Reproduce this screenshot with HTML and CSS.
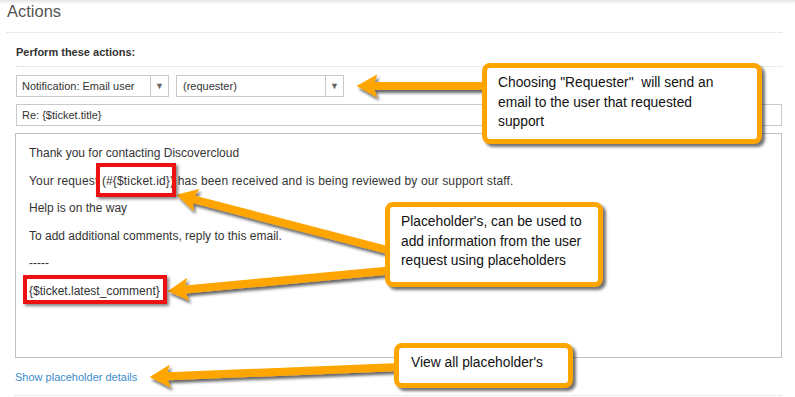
FILE: index.html
```html
<!DOCTYPE html>
<html lang="en">
<head>
  <meta charset="UTF-8" />
  <title>Actions</title>
  <link rel="stylesheet" href="styles.css">
</head>
<body>
  <div class="page">
    <h1 class="title">Actions</h1>

    <div class="panel">
      <h2 class="panel-title">Perform these actions:</h2>

      <div class="select-row">
        <div class="select select-action">
          <span class="select-value">Notification: Email user</span>
          <span class="select-arrow">&#9660;</span>
        </div>
        <div class="select select-target">
          <span class="select-value">(requester)</span>
          <span class="select-arrow">&#9660;</span>
        </div>
      </div>

      <div class="subject">Re: {$ticket.title}</div>

      <div class="message">
        <p>Thank you for contacting Discovercloud</p>
        <p class="wide">Your request (#{$ticket.id}) has been received and is being reviewed by our support staff.</p>
        <p>Help is on the way</p>
        <p>To add additional comments, reply to this email.</p>
        <p>-----</p>
        <p>{$ticket.latest_comment}</p>
      </div>

      <div class="details-row">
        <a class="details-link" href="#">Show placeholder details</a>
      </div>
    </div>

    <!-- annotations -->
    <svg class="arrows" width="795" height="397" viewBox="0 0 795 397">
      <defs>
        <marker id="head" viewBox="0 0 10 10" refX="4" refY="5" markerWidth="2.6" markerHeight="2.9" preserveAspectRatio="none" orient="auto">
          <path d="M0,0 L10,5 L0,10 L2,5 z" fill="#ffa500" />
        </marker>
        <filter id="shade" x="-10%" y="-50%" width="120%" height="200%">
          <feDropShadow dx="2" dy="3" stdDeviation="1.5" flood-color="#000" flood-opacity="0.6" />
        </filter>
      </defs>
      <g filter="url(#shade)" stroke="#ffa500" stroke-width="8" fill="none">
        <line x1="490" y1="86" x2="369" y2="86" marker-end="url(#head)" />
        <line x1="395" y1="252" x2="188.6" y2="198" marker-end="url(#head)" />
        <line x1="395" y1="270" x2="180" y2="290" marker-end="url(#head)" />
        <line x1="400" y1="367" x2="162" y2="376.5" marker-end="url(#head)" />
      </g>
    </svg>

    <div class="mark mark-id"></div>
    <div class="mark mark-comment"></div>

    <div class="callout callout-requester">Choosing "Requester"&nbsp; will send an<br>email to the user that requested<br>support</div>
    <div class="callout callout-placeholders">Placeholder's, can be used to<br>add information from the user<br>request using placeholders</div>
    <div class="callout callout-all">View all placeholder's</div>
  </div>
</body>
</html>
```

FILE: styles.css
```css
* {
  box-sizing: border-box;
}

body {
  margin: 0;
  font-family: "Liberation Sans", Arial, sans-serif;
  color: #333;
  background: linear-gradient(#e4e4e4, #fff 4px) no-repeat;
}

.page {
  position: relative;
  width: 795px;
  height: 397px;
  overflow: hidden;
}

.title {
  margin: 0 0 0 7px;
  width: 775px;
  padding-bottom: 10px;
  font-size: 16.5px;
  font-weight: normal;
  line-height: 22px;
  color: #555;
  border-bottom: 1px dotted #d6d6d6;
}

.panel {
  margin-left: 16px;
  width: 766px;
}

.panel-title {
  margin: 0;
  padding: 12px 0 7px;
  font-size: 11px;
  line-height: 14px;
  font-weight: bold;
  color: #333;
  border-bottom: 1px dotted #d6d6d6;
}

.select-row {
  display: flex;
  gap: 7px;
  margin-top: 8px;
}

.select {
  display: flex;
  height: 22px;
  border: 1px solid #c9c9c9;
  background: #fff;
  font-size: 11px;
  line-height: 20px;
}

.select-action {
  width: 153px;
}

.select-target {
  width: 168px;
}

.select-value {
  flex: 1;
  padding-left: 5px;
}

.select-target .select-value {
  padding-left: 6px;
}

.select-arrow {
  width: 18px;
  border-left: 1px solid #c9c9c9;
  text-align: center;
  font-size: 9px;
  color: #666;
}

.subject {
  margin-top: 7px;
  height: 22px;
  padding-left: 5px;
  border: 1px solid #c9c9c9;
  font-size: 11px;
  line-height: 20px;
}

.message {
  margin: 7px 0 0 -1px;
  width: 767px;
  height: 225px;
  padding: 6px 13px 0;
  border: 1px solid #c2c2c2;
  font-size: 12px;
}

.message p {
  margin: 0;
  line-height: 27.6px;
  white-space: nowrap;
}

.message p.wide {
  letter-spacing: 0.15px;
}

.details-row {
  margin-left: -1px;
  margin-top: 12px;
  padding-bottom: 11px;
  border-bottom: 1px dotted #d6d6d6;
  font-size: 11px;
  line-height: 14px;
}

.details-link {
  color: #3d8bcb;
  text-decoration: none;
}

.arrows {
  position: absolute;
  left: 0;
  top: 0;
}

.mark {
  position: absolute;
  border: 4px solid #ee1111;
  box-shadow: 2px 2px 3px rgba(0, 0, 0, 0.5);
}

.mark-id {
  left: 96px;
  top: 163px;
  width: 80px;
  height: 34px;
}

.mark-comment {
  left: 23px;
  top: 275px;
  width: 144px;
  height: 29px;
}

.callout {
  position: absolute;
  padding: 5px 11px;
  background: #fff;
  border: 5px solid #ffa500;
  border-radius: 8px;
  box-shadow: 3px 3px 3px rgba(0, 0, 0, 0.55);
  font-size: 13.8px;
  line-height: 19.5px;
  color: #111;
  white-space: nowrap;
}

.callout-requester {
  left: 482px;
  top: 63px;
  width: 280px;
  height: 81px;
}

.callout-placeholders {
  left: 385px;
  top: 202px;
  width: 218px;
  height: 85px;
}

.callout-all {
  left: 394px;
  top: 343px;
  width: 179px;
  height: 45px;
  padding-left: 12px;
}
```
